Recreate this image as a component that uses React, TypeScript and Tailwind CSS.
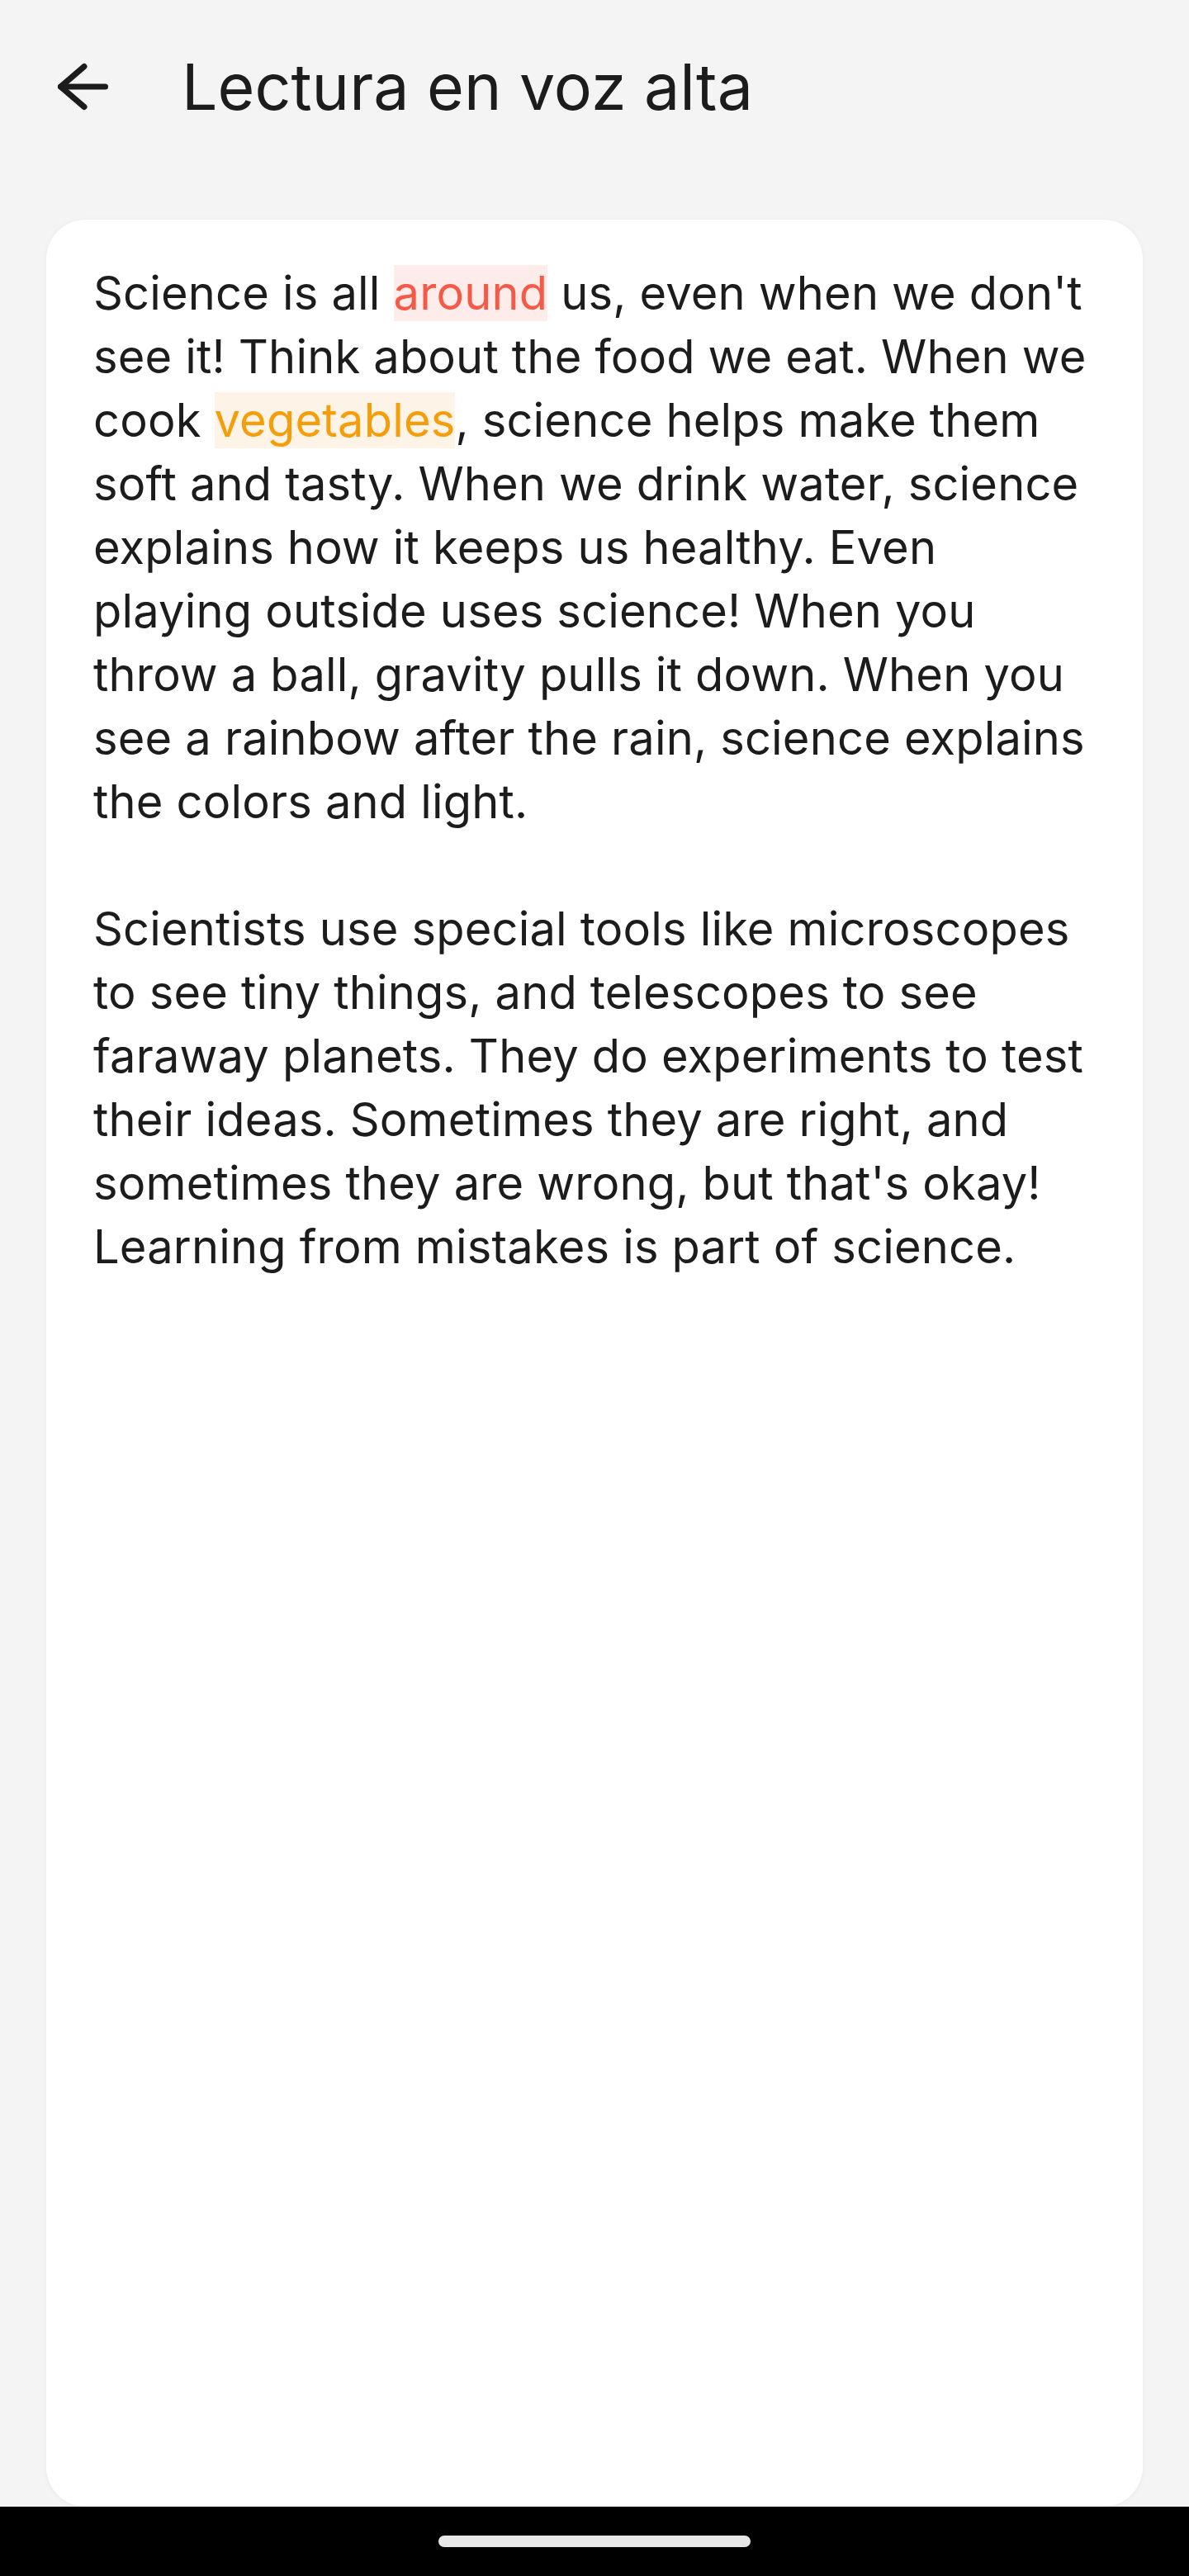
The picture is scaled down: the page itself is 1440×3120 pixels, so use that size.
import React from 'react';

const story = [
  [
    { t: 'Science is all ' },
    { t: 'around', tone: 'red' },
    { t: " us, even when we don't see it! Think about the food we eat. When we cook " },
    { t: 'vegetables', tone: 'amber' },
    {
      t: ', science helps make them soft and tasty. When we drink water, science explains how it keeps us healthy. Even playing outside uses science! When you throw a ball, gravity pulls it down. When you see a rainbow after the rain, science explains the colors and light.',
    },
  ],
  [
    {
      t: "Scientists use special tools like microscopes to see tiny things, and telescopes to see faraway planets. They do experiments to test their ideas. Sometimes they are right, and sometimes they are wrong, but that's okay! Learning from mistakes is part of science.",
    },
  ],
];

function BackArrow() {
  return (
    <svg width="66" height="58" viewBox="0 0 66 58" fill="none" stroke="#1c1c1c" strokeWidth="7" strokeLinecap="round" strokeLinejoin="round">
      <path d="M36 4.5 7.5 29 36 53.5" />
      <path d="M7.5 29h54" />
    </svg>
  );
}

export default function App() {
  return (
    <div
      className="w-[1440px] h-[3120px] bg-[#f4f4f4] flex flex-col text-[#1c1c1c]"
      style={{ fontFamily: 'Inter, "Noto Sans", sans-serif' }}
    >
      <header className="h-[210px] shrink-0 flex items-center">
        <button className="ml-[66px] w-[66px] h-[58px] flex items-center">
          <BackArrow />
        </button>
        <h1 className="ml-[88px] text-[77px] leading-[77px] font-normal">Lectura en voz alta</h1>
      </header>

      <main className="mt-[56px] mx-[56px] flex-1 bg-white rounded-[48px] shadow-[0_1px_6px_rgba(0,0,0,0.05)] pl-[57px] pr-[50px] pt-[51px]">
        {story.map((para, i) => (
          <p key={i} className={`text-[56px] leading-[77px] tracking-[0.18px] ${i > 0 ? 'mt-[77px]' : ''}`}>
            {para.map((seg, j) =>
              seg.tone === 'red' ? (
                <span key={j} className="bg-[#fdecea] text-[#f55a47]">{seg.t}</span>
              ) : seg.tone === 'amber' ? (
                <span key={j} className="bg-[#fdf3e6] text-[#f59e0b]">{seg.t}</span>
              ) : (
                <span key={j}>{seg.t}</span>
              )
            )}
          </p>
        ))}
      </main>

      <div className="h-[84px] shrink-0 bg-black flex items-center justify-center">
        <div className="w-[378px] h-[14px] rounded-full bg-[#e8e8e8]" />
      </div>
    </div>
  );
}
